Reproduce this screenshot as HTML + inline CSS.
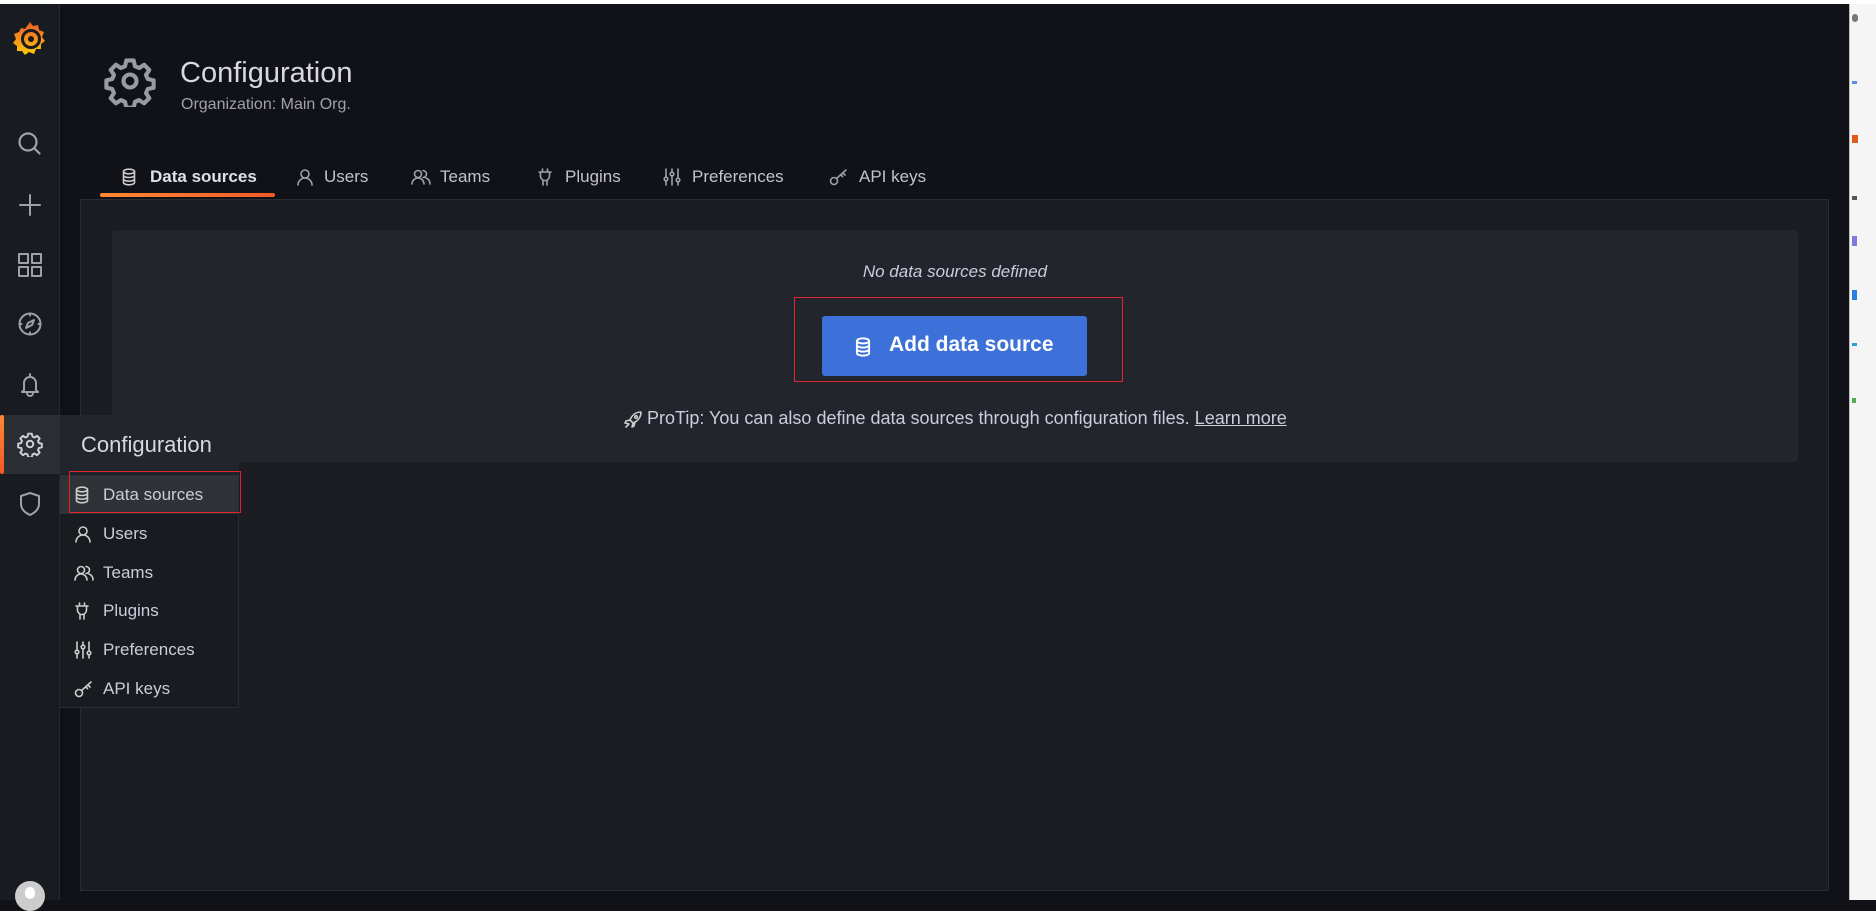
<!DOCTYPE html>
<html><head><meta charset="utf-8"><style>
*{box-sizing:border-box;margin:0;padding:0}
body{width:1876px;height:900px;overflow:hidden;background:#111217;font-family:"Liberation Sans",Arial,sans-serif;color:#ccccdc;position:relative}
.abs{position:absolute}
svg{display:block}
.ic{fill:none;stroke:#9fa1a8;stroke-width:1.6;stroke-linecap:round;stroke-linejoin:round}
.tab{position:absolute;top:167px;font-size:17px;color:#c2c3cb;white-space:nowrap}
.mi{position:absolute;left:60px;width:178px;height:39px;font-size:17px;color:#ccccdc}
.mi span{position:absolute;left:43px;top:10px}
.mi svg{position:absolute;left:14px;top:11px}
</style></head><body>
<div class="abs" style="left:0;top:0;width:1876px;height:4px;background:#fff"></div>
<div class="abs" style="left:1849px;top:4px;width:27px;height:896px;background:#f5f5f5;border-left:1px solid #bbb"></div>
<div class="abs" style="left:1852px;top:14px;width:6px;height:8px;background:#777;border-radius:3px"></div>
<div class="abs" style="left:1852px;top:81px;width:5px;height:3px;background:#5a8de0"></div>
<div class="abs" style="left:1852px;top:135px;width:6px;height:8px;background:#e05a1a"></div>
<div class="abs" style="left:1852px;top:196px;width:5px;height:4px;background:#555"></div>
<div class="abs" style="left:1852px;top:236px;width:5px;height:10px;background:#7b7be0"></div>
<div class="abs" style="left:1852px;top:290px;width:5px;height:10px;background:#2a7ee0"></div>
<div class="abs" style="left:1852px;top:343px;width:5px;height:3px;background:#2aa0e0"></div>
<div class="abs" style="left:1852px;top:398px;width:4px;height:5px;background:#5a5"></div>

<!-- sidebar -->
<div class="abs" style="left:0;top:4px;width:60px;height:896px;background:#181b1f;border-right:1px solid #25272c"></div>
<svg class="abs" style="left:12px;top:20px" width="36" height="36" viewBox="0 0 36 36">
<defs><linearGradient id="g" x1="0" y1="0" x2="0" y2="1"><stop offset="0" stop-color="#f05a28"/><stop offset="1" stop-color="#fbca0a"/></linearGradient></defs>
<path fill="url(#g)" d="M18 2l3 4 5-1 1 5 5 2-2 5 3 4-4 3 0 5-5 0-2 5-5-2-4 3-3-4-5 0 0-5-4-3 3-4-2-5 5-2 2-4 4 1z"/>
<circle cx="19" cy="19" r="8.5" fill="none" stroke="#181b1f" stroke-width="3"/>
<circle cx="19" cy="19" r="3" fill="#181b1f"/>
</svg>
<svg class="abs" style="left:16px;top:130px" width="28" height="28" viewBox="0 0 28 28"><circle class="ic" cx="12" cy="12" r="8.5" style="stroke-width:2.2"/><path class="ic" d="M18.5 18.5l5 5" style="stroke-width:2.2"/></svg>
<svg class="abs" style="left:17px;top:192px" width="26" height="26" viewBox="0 0 26 26"><path class="ic" d="M13 3v20M3 13h20" style="stroke-width:2"/></svg>
<svg class="abs" style="left:17px;top:252px" width="26" height="26" viewBox="0 0 26 26"><g class="ic" style="stroke-width:2"><rect x="2" y="2" width="9" height="9"/><rect x="15" y="2" width="9" height="9"/><rect x="2" y="15" width="9" height="9"/><rect x="15" y="15" width="9" height="9"/></g></svg>
<svg class="abs" style="left:17px;top:311px" width="26" height="26" viewBox="0 0 26 26"><g class="ic" style="stroke-width:2"><circle cx="13" cy="13" r="10.5"/><path d="M17 9l-6 3-2 5 6-3z"/><path d="M13 2.5v2M13 21.5v2M2.5 13h2M21.5 13h2"/></g></svg>
<svg class="abs" style="left:17px;top:371px" width="26" height="26" viewBox="0 0 26 26"><g class="ic" style="stroke-width:2"><path d="M13 3v2M7 19v-7a6 6 0 0 1 12 0v7l2 2H5z"/><path d="M10 22a3 3 0 0 0 6 0"/></g></svg>
<div class="abs" style="left:0;top:415px;width:60px;height:59px;background:#2b2e33"></div>
<div class="abs" style="left:0;top:415px;width:4px;height:59px;background:linear-gradient(#ff8833,#f05a28);border-radius:2px"></div>
<svg class="abs" style="left:17px;top:431px" width="26" height="26" viewBox="0 0 24 24"><g class="ic" style="stroke:#d0d1d8;stroke-width:1.8"><circle cx="12" cy="12" r="3"/><path d="M10.3 2.5h3.4l.6 2.7 1.9.8 2.3-1.5 2.4 2.4-1.5 2.3.8 1.9 2.7.6v3.4l-2.7.6-.8 1.9 1.5 2.3-2.4 2.4-2.3-1.5-1.9.8-.6 2.7h-3.4l-.6-2.7-1.9-.8-2.3 1.5-2.4-2.4 1.5-2.3-.8-1.9-2.7-.6v-3.4l2.7-.6.8-1.9-1.5-2.3 2.4-2.4 2.3 1.5 1.9-.8z"/></g></svg>
<svg class="abs" style="left:18px;top:491px" width="24" height="26" viewBox="0 0 24 26"><path class="ic" style="stroke-width:2" d="M12 2l9 3v8c0 6-5 9-9 11-4-2-9-5-9-11V5z"/></svg>
<div class="abs" style="left:15px;top:881px;width:30px;height:30px;border-radius:50%;background:#ccc;overflow:hidden"><div style="position:absolute;left:10px;top:6px;width:10px;height:12px;border-radius:5px;background:#fff"></div></div>

<!-- header -->
<svg class="abs" style="left:104px;top:55px" width="52" height="52" viewBox="0 0 24 24"><g class="ic" style="stroke:#9a9ba2;stroke-width:1.9"><circle cx="12" cy="12" r="3"/><path d="M10.3 2.5h3.4l.6 2.7 1.9.8 2.3-1.5 2.4 2.4-1.5 2.3.8 1.9 2.7.6v3.4l-2.7.6-.8 1.9 1.5 2.3-2.4 2.4-2.3-1.5-1.9.8-.6 2.7h-3.4l-.6-2.7-1.9-.8-2.3 1.5-2.4-2.4 1.5-2.3-.8-1.9-2.7-.6v-3.4l2.7-.6.8-1.9-1.5-2.3 2.4-2.4 2.3 1.5 1.9-.8z"/></g></svg>
<div class="abs" style="left:180px;top:57px;font-size:29px;color:#d8d9e0">Configuration</div>
<div class="abs" style="left:181px;top:96px;font-size:16px;color:#a0a1a8">Organization: Main Org.</div>

<!-- tabs -->
<svg class="abs" style="left:122px;top:168px" width="14" height="18" viewBox="0 0 14 18"><g class="ic" style="stroke:#ccc"><ellipse cx="7" cy="3.5" rx="5.5" ry="2.3"/><path d="M1.5 3.5v11c0 1.3 2.5 2.3 5.5 2.3s5.5-1 5.5-2.3v-11M1.5 7.2c0 1.3 2.5 2.3 5.5 2.3s5.5-1 5.5-2.3M1.5 10.9c0 1.3 2.5 2.3 5.5 2.3s5.5-1 5.5-2.3"/></g></svg>
<div class="tab" style="left:150px;font-weight:bold;color:#e0e1e8">Data sources</div>
<div class="abs" style="left:100px;top:193px;width:175px;height:4px;border-radius:2px;background:linear-gradient(90deg,#ff8833,#f05a28)"></div>
<svg class="abs" style="left:296px;top:168px" width="18" height="18" viewBox="0 0 18 18"><g class="ic"><circle cx="9" cy="6" r="4"/><path d="M2 17a7 7 0 0 1 14 0"/></g></svg>
<div class="tab" style="left:324px">Users</div>
<svg class="abs" style="left:411px;top:168px" width="20" height="18" viewBox="0 0 20 18"><g class="ic"><circle cx="7" cy="6" r="3.5"/><path d="M1 16a6 6 0 0 1 12 0M12 2.5a3.5 3.5 0 0 1 0 7M15 10a6 6 0 0 1 4 6"/></g></svg>
<div class="tab" style="left:440px">Teams</div>
<svg class="abs" style="left:537px;top:168px" width="16" height="18" viewBox="0 0 16 18"><g class="ic"><path d="M2 4h12M3.5 4v4a4.5 4.5 0 0 0 9 0V4M5.5 1v3M10.5 1v3M6 12v5M10 12v5"/></g></svg>
<div class="tab" style="left:565px">Plugins</div>
<svg class="abs" style="left:663px;top:168px" width="18" height="18" viewBox="0 0 18 18"><g class="ic"><path d="M3 1v16M9 1v16M15 1v16"/><circle cx="3" cy="11" r="1.8" fill="#111217"/><circle cx="9" cy="6" r="1.8" fill="#111217"/><circle cx="15" cy="12" r="1.8" fill="#111217"/></g></svg>
<div class="tab" style="left:692px">Preferences</div>
<svg class="abs" style="left:829px;top:168px" width="20" height="18" viewBox="0 0 20 18"><g class="ic"><circle cx="5" cy="13" r="3.5"/><path d="M7.5 10.5L17 2M14 5l2 2M12 7l1.5 1.5"/></g></svg>
<div class="tab" style="left:859px">API keys</div>

<!-- panel -->
<div class="abs" style="left:80px;top:199px;width:1749px;height:692px;background:#1b1d22;border:1px solid #2a2c31"></div>
<div class="abs" style="left:112px;top:230px;width:1686px;height:232px;background:#22252c;border-radius:4px"></div>
<div class="abs" style="left:112px;top:262px;width:1686px;text-align:center;font-size:17px;font-style:italic;color:#ccccdc">No data sources defined</div>
<div class="abs" style="left:794px;top:297px;width:329px;height:85px;border:1px solid #e0262c"></div>
<div class="abs" style="left:822px;top:316px;width:265px;height:60px;background:#3d71d9;border-radius:3px"></div>
<svg class="abs" style="left:855px;top:337px" width="16" height="20" viewBox="0 0 14 18"><g class="ic" style="stroke:#fff;stroke-width:1.7"><ellipse cx="7" cy="3.5" rx="5.5" ry="2.3"/><path d="M1.5 3.5v11c0 1.3 2.5 2.3 5.5 2.3s5.5-1 5.5-2.3v-11M1.5 7.2c0 1.3 2.5 2.3 5.5 2.3s5.5-1 5.5-2.3M1.5 10.9c0 1.3 2.5 2.3 5.5 2.3s5.5-1 5.5-2.3"/></g></svg>
<div class="abs" style="left:889px;top:333px;font-size:21px;font-weight:bold;color:#fff">Add data source</div>
<svg class="abs" style="left:623px;top:410px" width="20" height="20" viewBox="0 0 20 20"><g class="ic" style="stroke:#ccc"><path d="M18 2c-5 0-9 3-11 8l3 3c5-2 8-6 8-11zM7 10l-4 1-1 2 4 1M10 13l-1 4 2-1 1-4M6 14l-3 3"/><circle cx="13" cy="7" r="1.3"/></g></svg>
<div class="abs" style="left:647px;top:408px;font-size:18px;color:#ccccdc;white-space:nowrap">ProTip: You can also define data sources through configuration files. <span style="text-decoration:underline">Learn more</span></div>

<!-- flyout menu -->
<div class="abs" style="left:60px;top:415px;width:179px;height:293px;background:#181b1f;border:1px solid #2a2c31;border-left:none"></div>
<div class="abs" style="left:60px;top:415px;width:179px;height:59px;background:#22252b"></div>
<div class="abs" style="left:81px;top:432px;font-size:22px;color:#d8d9e0">Configuration</div>
<div class="mi" style="top:475px;background:#2f3237"><svg width="14" height="18" viewBox="0 0 14 18" style="left:15px"><g class="ic" style="stroke:#ccc"><ellipse cx="7" cy="3.5" rx="5.5" ry="2.3"/><path d="M1.5 3.5v11c0 1.3 2.5 2.3 5.5 2.3s5.5-1 5.5-2.3v-11M1.5 7.2c0 1.3 2.5 2.3 5.5 2.3s5.5-1 5.5-2.3M1.5 10.9c0 1.3 2.5 2.3 5.5 2.3s5.5-1 5.5-2.3"/></g></svg><span>Data sources</span></div>
<div class="abs" style="left:69px;top:471px;width:172px;height:42px;border:1px solid #e0262c"></div>
<div class="mi" style="top:514px"><svg width="18" height="18" viewBox="0 0 18 18"><g class="ic" style="stroke:#ccc"><circle cx="9" cy="6" r="4"/><path d="M2 17a7 7 0 0 1 14 0"/></g></svg><span>Users</span></div>
<div class="mi" style="top:553px"><svg width="20" height="18" viewBox="0 0 20 18"><g class="ic" style="stroke:#ccc"><circle cx="7" cy="6" r="3.5"/><path d="M1 16a6 6 0 0 1 12 0M12 2.5a3.5 3.5 0 0 1 0 7M15 10a6 6 0 0 1 4 6"/></g></svg><span>Teams</span></div>
<div class="mi" style="top:591px"><svg width="16" height="18" viewBox="0 0 16 18"><g class="ic" style="stroke:#ccc"><path d="M2 4h12M3.5 4v4a4.5 4.5 0 0 0 9 0V4M5.5 1v3M10.5 1v3M6 12v5M10 12v5"/></g></svg><span>Plugins</span></div>
<div class="mi" style="top:630px"><svg width="18" height="18" viewBox="0 0 18 18"><g class="ic" style="stroke:#ccc"><path d="M3 1v16M9 1v16M15 1v16"/><circle cx="3" cy="11" r="1.8" fill="#181b1f"/><circle cx="9" cy="6" r="1.8" fill="#181b1f"/><circle cx="15" cy="12" r="1.8" fill="#181b1f"/></g></svg><span>Preferences</span></div>
<div class="mi" style="top:669px"><svg width="20" height="18" viewBox="0 0 20 18"><g class="ic" style="stroke:#ccc"><circle cx="5" cy="13" r="3.5"/><path d="M7.5 10.5L17 2M14 5l2 2M12 7l1.5 1.5"/></g></svg><span>API keys</span></div>
</body></html>
